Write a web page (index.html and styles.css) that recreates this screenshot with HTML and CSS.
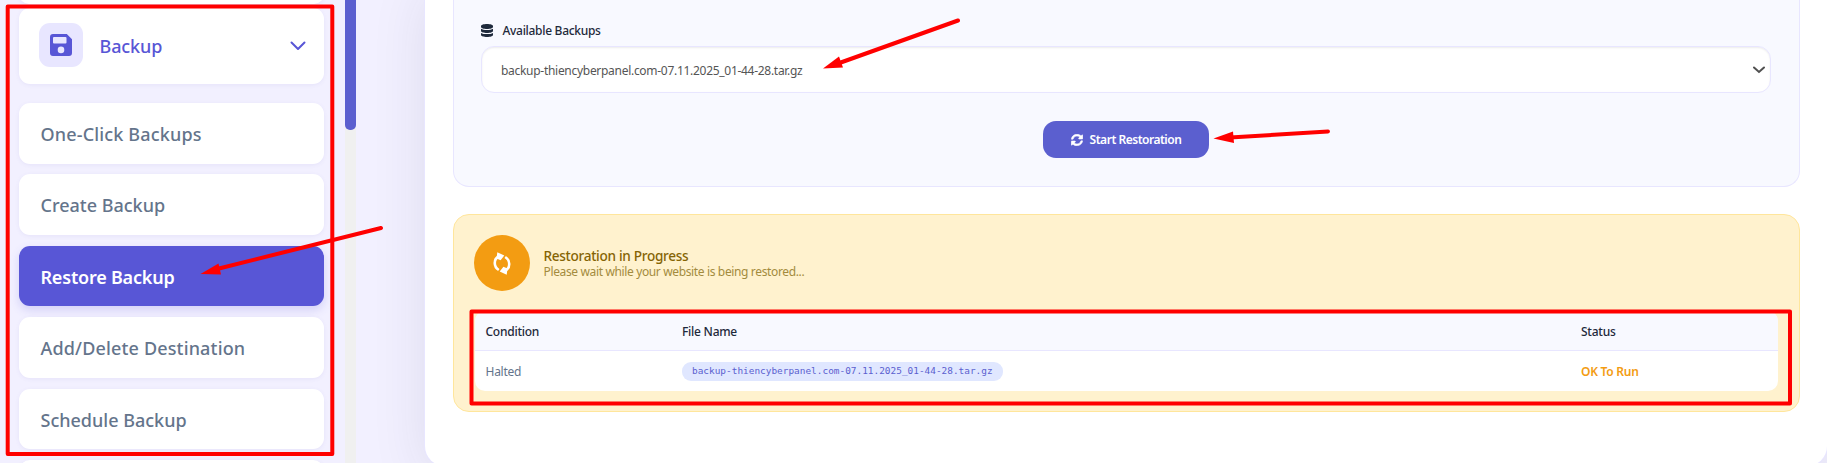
FILE: index.html
```html
<!DOCTYPE html>
<html lang="en">
<head>
<meta charset="utf-8">
<title>Restore Backup</title>
<link rel="stylesheet" href="styles.css">
</head>
<body>
<div class="app">
  <aside class="sidebar">
    <nav class="menu">
      <div class="stub"></div>
      <div class="group">
        <span class="group-icon"><svg width="22" height="22" viewBox="0 0 22 22"><path fill="currentColor" fill-rule="evenodd" d="M3 0H16.8L22 5.2V19a3 3 0 0 1-3 3H3a3 3 0 0 1-3-3V3a3 3 0 0 1 3-3ZM4 3a1 1 0 0 0-1 1v4.500a1 1 0 0 0 1 1H15.500a1 1 0 0 0 1-1V4a1 1 0 0 0-1-1ZM11 12.600a3.300 3.300 0 1 0 0 6.600a3.300 3.300 0 0 0 0-6.600Z"/></svg></span>
        <span class="group-name">Backup</span>
        <svg class="group-chevron" width="16" height="10" viewBox="0 0 16 10"><path d="M1.500 1.500L8 8L14.500 1.500" fill="none" stroke="currentColor" stroke-width="2" stroke-linecap="round" stroke-linejoin="round"/></svg>
      </div>
      <a class="item"><span class="wide">One-Click Backups</span></a>
      <a class="item"><span>Create Backup</span></a>
      <a class="item active"><span>Restore Backup</span></a>
      <a class="item"><span class="wide">Add/Delete Destination</span></a>
      <a class="item"><span>Schedule Backup</span></a>
      <a class="item"></a>
    </nav>
    <div class="scrollbar"><div class="thumb"></div></div>
  </aside>
  <main class="panel">
    <section class="form">
      <div class="label">
        <svg width="12" height="13" viewBox="0 0 12 13" fill="currentColor"><path d="M0 2C0 .9 2.700 0 6 0s6 .9 6 2v.9c0 1.100-2.700 2-6 2s-6-.9-6-2Z"/><path d="M0 4.800c1.300.9 3.500 1.200 6 1.200s4.700-.3 6-1.200V7c0 1.100-2.700 2-6 2S0 8.100 0 7Z"/><path d="M0 8.900c1.300.9 3.500 1.200 6 1.200s4.700-.3 6-1.200V11c0 1.100-2.700 2-6 2s-6-.9-6-2Z"/></svg>
        <span>Available Backups</span>
      </div>
      <div class="select"><span>backup-thiencyberpanel.com-07.11.2025_01-44-28.tar.gz</span>
        <svg width="12" height="8" viewBox="0 0 12 8"><path d="M1 1.500L6 6L11 1.500" fill="none" stroke="#505050" stroke-width="2" stroke-linecap="round"/></svg>
      </div>
      <div class="button"><svg width="12" height="12" viewBox="0 0 512 512" fill="currentColor" stroke="currentColor" stroke-width="22"><path d="M370.700 133.300C339.500 104 298.900 88 255.800 88c-77.500.1-144.300 53.200-162.800 126.900-1.300 5.400-6.100 9.100-11.700 9.100H24.100c-7.500 0-13.200-6.800-11.800-14.200C33.900 94.900 134.800 8 256 8c66.400 0 126.800 26.100 171.300 68.700L463 41C478.100 25.900 504 36.600 504 57.900V192c0 13.300-10.700 24-24 24H345.900c-21.400 0-32.100-25.900-17-41zM32 296h134.100c21.400 0 32.100 25.900 17 41l-41.800 41.800c31.300 29.300 71.800 45.300 114.900 45.300 77.400-.1 144.300-53.100 162.800-126.800 1.300-5.400 6.100-9.100 11.700-9.100h57.300c7.500 0 13.200 6.800 11.800 14.200C478.100 417.100 377.200 504 256 504c-66.400 0-126.800-26.100-171.300-68.700L49 471C33.900 486.100 8 475.400 8 454.100V320c0-13.300 10.700-24 24-24z"/></svg><span>Start Restoration</span></div>
    </section>
    <section class="progress">
      <div class="head">
        <div class="spinner"><svg width="18" height="23" viewBox="0 0 18 23"><g fill="none" stroke="currentColor" stroke-width="2.600"><path d="M5.800 18C.3 14.500.6 7.200 5.500 4.500"/><path d="M12.200 5C17.700 8.500 17.400 15.800 12.500 18.500"/></g><path fill="currentColor" d="M4.300.3L11.300 3.500L7.600 8.200L3.500 6.400ZM13.700 22.700L6.700 19.500L10.400 14.800L14.500 16.600Z"/></svg></div>
        <div>
          <div class="title"><span>Restoration in Progress</span></div>
          <div class="subtitle"><span>Please wait while your website is being restored...</span></div>
        </div>
      </div>
      <div class="table">
        <div class="row header"><b>Condition</b><b>File Name</b><b>Status</b></div>
        <div class="row"><i>Halted</i><code>backup-thiencyberpanel.com-07.11.2025_01-44-28.tar.gz</code><b class="ok">OK To Run</b></div>
      </div>
    </section>
  </main>
</div>
<svg class="marks" width="1827" height="463" viewBox="0 0 1827 463">
  <g fill="none" stroke="#f00" stroke-width="4" stroke-linejoin="round" stroke-linecap="round">
    <rect x="7.700" y="6.500" width="324.600" height="447.500"/>
    <rect x="471.500" y="311.500" width="1318.500" height="92"/>
    <path d="M381 228L215 269.500M958 20.500L838 63.500M1328 131.500L1230 137.500"/>
  </g>
  <g fill="#f00">
    <path d="M200.500 274L218.500 263.500L221 274.500Z"/>
    <path d="M823 68.500L839 56.500L843 67.500Z"/>
    <path d="M1213.500 138.500L1233 131.500L1234 143Z"/>
  </g>
</svg>
</body>
</html>
```
FILE: styles.css
```css
* { box-sizing: border-box; }
body { margin: 0; width: 1827px; height: 463px; overflow: hidden; font-family: "Noto Sans", "Open Sans", sans-serif; }
span, b, i, code { white-space: nowrap; }
.app { display: flex; height: 463px; overflow: hidden; background: #f2f0ff; }
.sidebar { width: 356px; flex: none; display: flex; justify-content: space-between; }
.menu { width: 324px; padding-left: 19px; display: flex; flex-direction: column; }
.stub, .group, .item { flex: none; background: #fff; border-radius: 11px; box-shadow: 0 1px 4px rgba(90, 80, 180, .08); }
.stub { height: 20px; margin-top: -16px; margin-bottom: 4px; }
.group { height: 76px; display: flex; align-items: center; padding: 0 18px 0 20px; margin-bottom: 19px; color: #5856d6; }
.group-icon { width: 44px; height: 44px; margin-top: -2px; border-radius: 11px; background: #e8e6ff; display: grid; place-items: center; }
.group-name { flex: 1; margin-left: 16.500px; font-size: 18px; font-weight: 500; letter-spacing: -.1px; }
.group-chevron { display: block; }
.item { height: 60.700px; margin-bottom: 10.700px; padding: 1.500px 0 0 21.500px; display: flex; align-items: center; color: #64748b; font-size: 18px; font-weight: 500; letter-spacing: 0; }
.item .wide { letter-spacing: .16px; }
.active { background: #5856d6; color: #fff; font-weight: 600; letter-spacing: -.2px; box-shadow: 0 4px 10px rgba(88, 86, 214, .2); }
.scrollbar { width: 11px; height: 463px; background: #f0f0f0; }
.thumb { height: 130px; background: #5b5fcf; border-radius: 0 0 5px 5px; }
.panel { width: 1402px; height: 486px; margin: -20px 0 0 69px; flex: none; background: #fff; border-radius: 20px; box-shadow: 0 0 0 1px #e8e6ff, 0 10px 55px rgba(40, 35, 80, .1); padding: 20px 27px 0 28px; }
.form { height: 187px; border: 1px solid #e8e6ff; border-top: 0; border-radius: 0 0 16px 16px; background: #f8f9ff; padding: 20px 28px 0 27px; display: flex; flex-direction: column; }
.label { height: 20px; display: flex; align-items: center; gap: 9.500px; color: #1e293b; font-size: 12px; font-weight: 500; letter-spacing: -.3px; }
.select { height: 47px; margin-top: 6px; border: 1px solid #e8e6ff; border-radius: 13px; background: #fff; box-shadow: inset 0 1px 2px rgba(0, 0, 0, .08); display: flex; align-items: center; justify-content: space-between; padding: 1px 5px 0 19px; color: #555; font-size: 12px; letter-spacing: -.29px; }
.button { align-self: center; width: 166px; height: 37px; margin-top: 28px; border-radius: 13px; background: #5b5fcf; color: #fff; display: flex; align-items: center; justify-content: center; gap: 7px; font-size: 12px; font-weight: 600; letter-spacing: -.48px; }
.progress { height: 198px; margin-top: 27px; border: 1px solid #ffe69c; border-radius: 16px; background: #fff2ce; padding: 20px 21px 0 19.500px; }
.head { display: flex; align-items: center; gap: 14px; height: 56px; }
.spinner { width: 56px; height: 56px; border-radius: 50%; background: #f39c12; color: #fff; display: grid; place-items: center; }
.title { color: #856404; font-size: 13.600px; font-weight: 500; line-height: 17px; height: 17px; letter-spacing: -.3px; }
.subtitle { color: #a38b3d; font-size: 12px; line-height: 15px; height: 15px; letter-spacing: -.36px; }
.table { margin: 20px 0 0 1px; height: 80px; background: #fff; border-radius: 10px; overflow: hidden; }
.row { display: grid; grid-template-columns: 196.500px 899px 1fr; align-items: center; padding: 0 0 0 11px; height: 41px; font-size: 12px; letter-spacing: -.25px; }
.header { height: 40px; padding-top: 2px; background: #f8f9ff; border-bottom: 1px solid #e8e6ff; color: #1e293b; }
.row b { font-weight: 500; }
.row i { font-style: normal; color: #64748b; }
.row code { display: block; width: 321px; height: 19px; padding-left: 10px; border-radius: 9px; background: #e0e7ff; color: #5b5fcf; font: 9.430px/18px "DejaVu Sans Mono", monospace; letter-spacing: 0; }
.row .ok { color: #f39c12; font-weight: 600; }
.marks { position: absolute; left: 0; top: 0; pointer-events: none; }
```
